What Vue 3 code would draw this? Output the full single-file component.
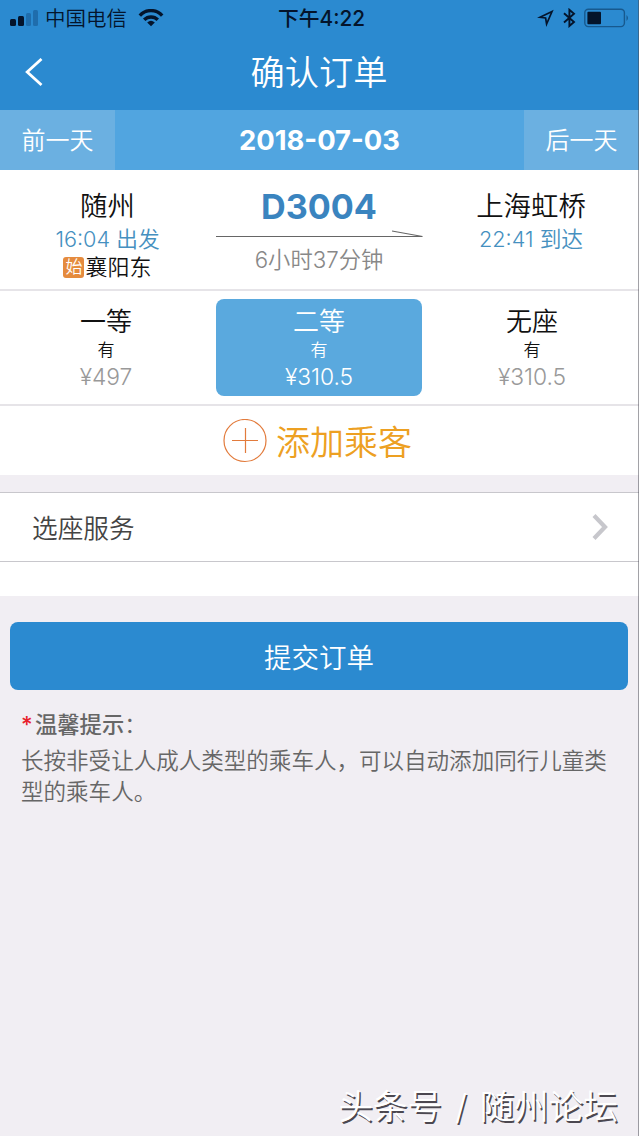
<script setup>
const seats = [
  { name: '一等', left: '有', price: '¥497', active: false },
  { name: '二等', left: '有', price: '¥310.5', active: true },
  { name: '无座', left: '有', price: '¥310.5', active: false },
]
</script>

<template>
  <div class="screen">
    <header class="top">
      <div class="status">
        <div class="carrier">
          <svg class="signal" width="29" height="18" viewBox="0 0 29 18">
            <rect x="0" y="10" width="6" height="7" rx="1.5" fill="#04142b" />
            <rect x="8" y="7" width="6" height="10" rx="1.5" fill="#04142b" />
            <rect x="16" y="4" width="5" height="13" rx="1.5" fill="#1f6dac" />
            <rect x="23" y="1" width="5" height="16" rx="1.5" fill="#1f6dac" />
          </svg>
          <span class="operator">中国电信</span>
          <svg class="wifi" width="26" height="18" viewBox="0 0 26 18" fill="none" stroke="#04142b" stroke-width="3.4">
            <path d="M1.8 6.6C8-.1 18-.1 24.2 6.6" />
            <path d="M6.2 10.8C10 7 16 7 19.8 10.8" />
            <path d="M9.2 13.4Q13 10.2 16.8 13.4L13 17.2Z" fill="#04142b" stroke="none" />
          </svg>
        </div>
        <span class="clock">下午4:22</span>
        <div class="indicators">
          <svg width="18" height="18" viewBox="0 0 18 18" fill="none" stroke="#04142b" stroke-width="1.7" stroke-linejoin="miter">
            <path d="M15 2.5L3 8.3L8.600 9L9.600 15Z" />
          </svg>
          <svg width="13" height="20" viewBox="0 0 13 20" fill="none" stroke="#04142b" stroke-width="1.9">
            <path d="M1 5.3L11 14L6.4 18V1.8L11 5.8L1 14.5" />
          </svg>
          <svg width="46" height="20" viewBox="0 0 46 20">
            <rect x=".8" y="1.2" width="39.6" height="17.4" rx="3.5" fill="none" stroke="#17598e" stroke-width="1.4" />
            <rect x="3.4" y="3.8" width="13.6" height="12.4" rx="1" fill="#04142b" />
            <path d="M42.5 7Q45.5 10 42.5 13Z" fill="#17598e" />
          </svg>
        </div>
      </div>
      <div class="nav">
        <svg class="back" width="20" height="30" viewBox="0 0 20 30" fill="none" stroke="#fff" stroke-width="2.8">
          <path d="M17.5 1L3.2 14L17.5 27" />
        </svg>
        <h1>确认订单</h1>
      </div>
    </header>

    <div class="days">
      <div class="day">前一天</div>
      <div class="date">2018-07-03</div>
      <div class="day">后一天</div>
    </div>

    <section class="trip">
      <div class="station from">
        <div class="city">随州</div>
        <div class="time">16:04 出发</div>
        <div class="origin"><span class="tag">始</span>襄阳东</div>
      </div>
      <div class="train">
        <div class="number">D3004</div>
        <svg width="208" height="10" viewBox="0 0 208 10" fill="none" stroke="#666" stroke-width="1.2">
          <path d="M1 6.500H207.500L177 1" />
        </svg>
        <div class="duration">6小时37分钟</div>
      </div>
      <div class="station to">
        <div class="city">上海虹桥</div>
        <div class="time">22:41 到达</div>
      </div>
    </section>

    <section class="seats">
      <div v-for="s in seats" :key="s.name" class="seat" :class="{ active: s.active }">
        <div class="kind">{{ s.name }}</div>
        <div class="left">{{ s.left }}</div>
        <div class="price">{{ s.price }}</div>
      </div>
    </section>

    <section class="add">
      <svg width="44" height="44" viewBox="0 0 44 44" fill="none" stroke="#e27b3c" stroke-width="1.2">
        <circle cx="22" cy="21.500" r="21" />
        <path d="M9 21.500H35M22.500 9V34" />
      </svg>
      <span>添加乘客</span>
    </section>

    <section class="service">
      <span>选座服务</span>
      <svg width="18" height="28" viewBox="0 0 18 28" fill="none" stroke="#c7c7cc" stroke-width="4.2">
        <path d="M3 2.5L14 14L3 25.5" />
      </svg>
    </section>
    <div class="blank"></div>

    <button class="submit">提交订单</button>

    <section class="tips">
      <div class="tips-title"><span class="star">*</span>温馨提示<span class="colon">：</span></div>
      <p>长按非受让人成人类型的乘车人，可以自动添加同行儿童类型的乘车人。</p>
    </section>

    <footer class="mark">头条号 / 随州论坛</footer>
    <div class="edge"></div>
  </div>
</template>

<style>
body {
  margin: 0;
}
</style>

<style scoped>
.screen {
  position: relative;
  display: flex;
  flex-direction: column;
  box-sizing: border-box;
  width: 639px;
  height: 1136px;
  overflow: hidden;
  background: #f1eef3;
  font-family: Inter, "Noto Sans CJK SC", sans-serif;
  font-weight: 350;
  color: #111;
  white-space: nowrap;
}
.edge {
  position: absolute;
  top: 0;
  right: 0;
  width: 1px;
  height: 100%;
  background: rgba(70, 70, 80, 0.5);
}
.top {
  height: 110px;
  background: #2b8ad0;
}
.status {
  display: grid;
  grid-template-columns: 1fr auto 1fr;
  align-items: center;
  height: 35px;
  padding: 0 9px 0 10px;
  color: #04142b;
}
.carrier,
.indicators {
  display: flex;
  align-items: center;
}
.operator {
  margin: -2px 11px 0 6px;
  font-size: 20.5px;
}
.clock {
  margin: -2px 0 0 3px;
  font-size: 20.8px;
  font-weight: 500;
}
.indicators {
  justify-content: flex-end;
  gap: 8px;
}
.nav {
  display: flex;
  align-items: center;
  height: 75px;
}
.back {
  margin-left: 24px;
}
h1 {
  flex: 1;
  margin: 0 45px 0 0;
  text-align: center;
  font-size: 34.2px;
  font-weight: 350;
  line-height: 73px;
  color: #fff;
}
.days {
  display: flex;
  height: 60px;
  background: #51a5e0;
  color: #fff;
  line-height: 61px;
  text-align: center;
}
.day {
  width: 115px;
  background: #6bb0e1;
  font-size: 24px;
}
.date {
  flex: 1;
  font-size: 27.4px;
  font-weight: 650;
}
.trip {
  display: grid;
  grid-template-columns: 215px 208px 1fr;
  box-sizing: border-box;
  height: 121px;
  padding-top: 19px;
  border-bottom: 2px solid #e6e4e8;
  background: #fff;
  text-align: center;
}
.city {
  font-size: 27.4px;
  line-height: 34px;
}
.time {
  font-size: 21.7px;
  line-height: 33px;
  color: #4590c0;
}
.origin {
  display: flex;
  align-items: center;
  justify-content: center;
  font-size: 22px;
  line-height: 22px;
}
.tag {
  width: 21px;
  height: 21px;
  margin-right: 1px;
  border-radius: 3px;
  background: #e58b3e;
  color: #fff;
  font-size: 17px;
  line-height: 20px;
}
.number {
  font-size: 34.2px;
  font-weight: 700;
  line-height: 35px;
  color: #3a84bf;
}
.train svg {
  display: block;
  margin-top: 6px;
}
.duration {
  margin-top: 3px;
  font-size: 22.3px;
  line-height: 33px;
  color: #888;
}
.seats {
  display: grid;
  grid-template-columns: 206px 206px 206px;
  column-gap: 7px;
  box-sizing: border-box;
  height: 115px;
  padding: 8px 0 9px 3px;
  border-bottom: 2px solid #e6e4e8;
  background: #fff;
  text-align: center;
}
.seat {
  height: 97px;
  border-radius: 8px;
}
.active {
  background: #5aa9de;
  color: #fff;
}
.kind {
  padding-top: 7px;
  font-size: 26px;
  line-height: 32px;
}
.left {
  font-size: 17px;
  line-height: 25px;
}
.price {
  font-size: 22.8px;
  line-height: 28px;
  color: #999;
}
.active .price {
  color: #fff;
}
.add {
  display: flex;
  align-items: center;
  justify-content: center;
  gap: 9px;
  height: 69px;
  padding-right: 4px;
  background: #fff;
  color: #eda022;
  font-size: 34px;
}
.service {
  display: flex;
  align-items: center;
  justify-content: space-between;
  box-sizing: border-box;
  height: 70px;
  margin-top: 17px;
  padding: 0 30px 0 32px;
  border-top: 1px solid #c8c7cc;
  border-bottom: 1px solid #c8c7cc;
  background: #fff;
  color: #444;
  font-size: 25.7px;
}
.service span {
  margin-top: -2px;
}
.blank {
  height: 34px;
  background: #fff;
}
.submit {
  height: 68px;
  margin: 26px 11px 0 10px;
  padding: 0 0 1px;
  border: 0;
  border-radius: 8px;
  background: #2b8ad0;
  color: #fff;
  font: inherit;
  font-size: 27.5px;
}
.tips {
  padding: 18px 20px 0 21px;
  color: #666;
}
.tips-title {
  font-size: 22.3px;
  font-weight: 450;
  line-height: 34px;
}
.star {
  display: inline-block;
  width: 14px;
  color: #e8202a;
}
.colon {
  font-weight: 350;
}
p {
  margin: 3px 0 0;
  font-size: 22.54px;
  line-height: 31px;
  white-space: normal;
}
.mark {
  margin: auto 21px 5px auto;
  color: #fff;
  font-size: 34.6px;
  line-height: 50px;
  word-spacing: 3px;
  text-shadow: 1.5px 1.5px 0.5px #4c4850;
}
</style>
